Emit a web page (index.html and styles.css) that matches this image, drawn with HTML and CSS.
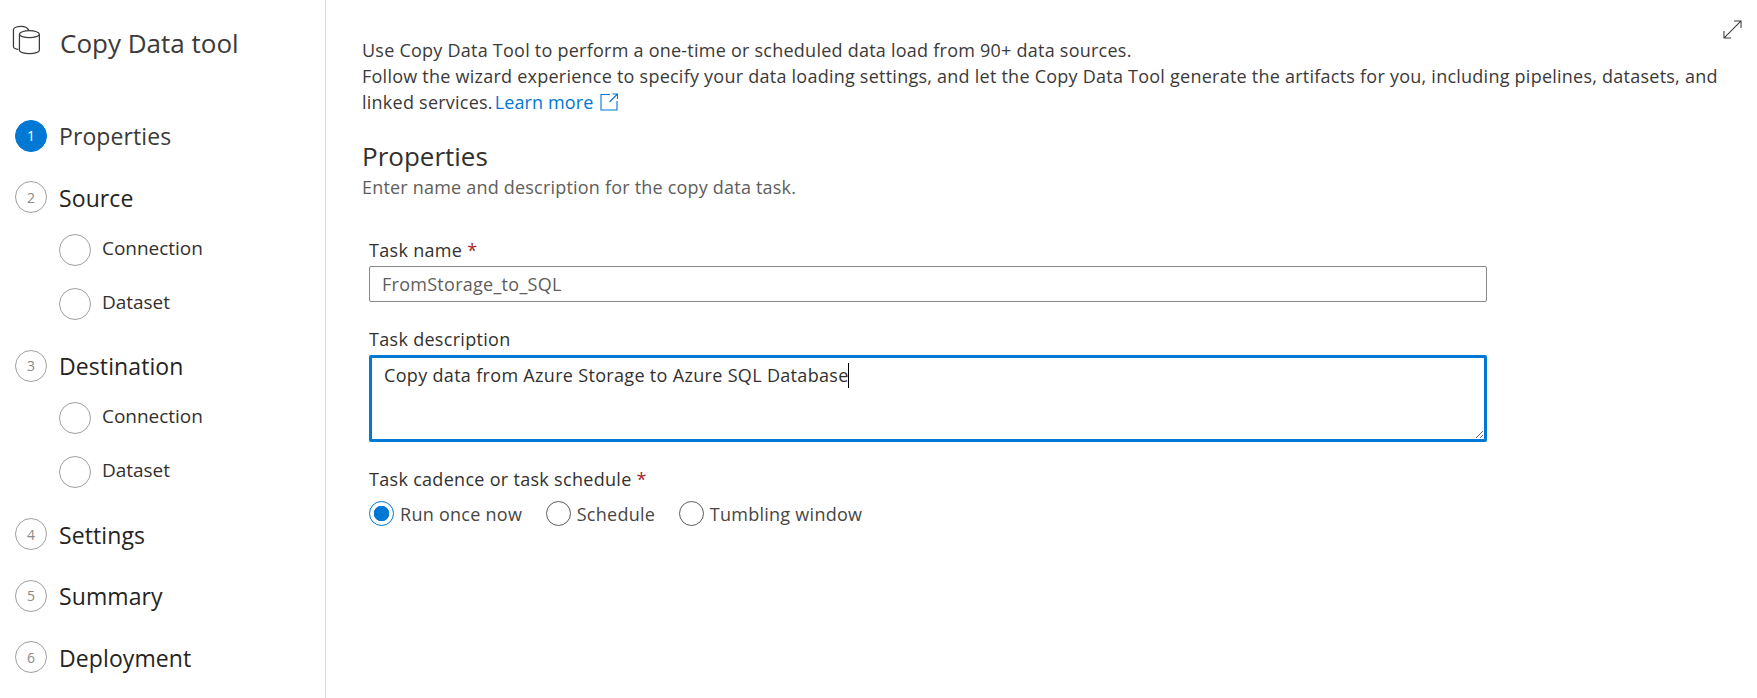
FILE: index.html
```html
<!DOCTYPE html>
<html lang="en">
<head>
<meta charset="utf-8">
<title>Copy Data tool</title>
<link rel="stylesheet" href="styles.css">
</head>
<body>
<div class="app">
  <aside class="sidebar">
    <header class="brand">
      <svg class="brand-icon" viewBox="0 0 30 32" fill="none" stroke="#3b3b3b" stroke-width="1.3">
        <ellipse cx="18" cy="9.5" rx="10.3" ry="3.6"/>
        <path d="M7.7 9.5V26c0 2 4.6 3.6 10.3 3.6S28.3 28 28.300 26V9.500"/>
        <path d="M17.500 5.300C15.800 2.800 12.500 1.500 9.500 1.500 5.500 1.500 1.500 2.800 1.500 5V22.500C1.500 24 3.500 24.800 6.500 25.300"/>
      </svg>
      <span class="brand-title">Copy Data tool</span>
    </header>
    <nav class="steps">
      <div class="step active"><span class="badge">1</span><span class="step-label">Properties</span></div>
      <div class="step"><span class="badge">2</span><span class="step-label">Source</span></div>
      <div class="sub first"><span class="sub-dot"></span><span class="sub-label">Connection</span></div>
      <div class="sub"><span class="sub-dot"></span><span class="sub-label">Dataset</span></div>
      <div class="step"><span class="badge">3</span><span class="step-label">Destination</span></div>
      <div class="sub first"><span class="sub-dot"></span><span class="sub-label">Connection</span></div>
      <div class="sub"><span class="sub-dot"></span><span class="sub-label">Dataset</span></div>
      <div class="step"><span class="badge">4</span><span class="step-label">Settings</span></div>
      <div class="step"><span class="badge">5</span><span class="step-label">Summary</span></div>
      <div class="step"><span class="badge">6</span><span class="step-label">Deployment</span></div>
    </nav>
  </aside>
  <main class="main">
    <svg class="expand" viewBox="0 0 20 20" fill="none" stroke="#3b3b3b" stroke-width="1.1">
      <path d="M1 19L19 1M11.500 1H19V8.500M1 11.500V19H8.500"/>
    </svg>
    <p class="intro">Use Copy Data Tool to perform a one-time or scheduled data load from 90+ data sources.<br>Follow the wizard experience to specify your data loading settings, and let the Copy Data Tool generate the artifacts for you, including pipelines, datasets, and<br>linked services. <a class="link" href="#">Learn more<svg class="ext" viewBox="0 0 18 18" fill="none" stroke="#0078d4" stroke-width="1.100"><path d="M10 1.500H1V17H17V8M12.500 1H17.500V6M17.500 1L9.500 9"/></svg></a></p>
    <h1 class="title">Properties</h1>
    <p class="subtitle">Enter name and description for the copy data task.</p>
    <form class="form">
      <div class="label">Task name <span class="req">*</span></div>
      <div class="input">FromStorage_to_SQL</div>
      <div class="label label-desc">Task description</div>
      <div class="textarea">Copy data from Azure Storage to Azure SQL Database<span class="caret"></span></div>
      <div class="label label-cad">Task cadence or task schedule <span class="req">*</span></div>
      <div class="radios">
        <div class="radio on"><span class="radio-dot"></span><span class="radio-text">Run once now</span></div>
        <div class="radio"><span class="radio-dot"></span><span class="radio-text">Schedule</span></div>
        <div class="radio"><span class="radio-dot"></span><span class="radio-text">Tumbling window</span></div>
      </div>
    </form>
  </main>
</div>
</body>
</html>
```
FILE: styles.css
```css
* { box-sizing: border-box; }
html, body { margin: 0; height: 100%; background: #fff; }
body {
  font-family: "Open Sans", "Noto Sans", "Liberation Sans", sans-serif;
  color: #323130;
  overflow: hidden;
}
.app { display: flex; height: 698px; }

.sidebar {
  width: 326px;
  flex: none;
  border-right: 1px solid #dcdcdc;
  padding: 24px 0 0 12px;
}
.brand { display: flex; align-items: center; height: 32px; }
.brand-icon { width: 29px; height: 31px; flex: none; }
.brand-title {
  margin-left: 19px;
  padding-top: 5px;
  font-size: 26px;
  line-height: 32px;
  color: #3b3a39;
}
.steps { margin-top: 64px; margin-left: 3px; }
.step { display: flex; align-items: center; height: 31px; margin-top: 30.5px; }
.step:first-child { margin-top: 0; }
.badge {
  width: 32px;
  height: 32px;
  flex: none;
  border: 1px solid #a0a0a0;
  border-radius: 50%;
  display: flex;
  align-items: center;
  justify-content: center;
  font-size: 14px;
  color: #8a8886;
}
.active .badge { background: #0078d4; border-color: #0078d4; color: #fff; }
.step-label {
  margin-left: 12px;
  padding-top: 1px;
  font-size: 23px;
  letter-spacing: 0.1px;
  font-weight: 500;
  color: #252423;
}
.active .step-label { color: #3b3a39; }
.sub { display: flex; align-items: center; height: 32px; margin: 22px 0 0 44px; }
.sub.first { margin-top: 21px; }
.sub-dot {
  width: 32px;
  height: 32px;
  flex: none;
  border: 1px solid #a0a0a0;
  border-radius: 50%;
}
.sub-label {
  margin-left: 11px;
  padding-bottom: 4px;
  font-size: 19px;
  letter-spacing: -0.03px;
  font-weight: 500;
  color: #323130;
}

.main { flex: 1; position: relative; padding: 37px 0 0 36px; min-width: 0; }
.expand { position: absolute; top: 20px; right: 15px; width: 19px; height: 19px; }
.intro {
  margin: 0;
  font-size: 18px;
  line-height: 26px;
  letter-spacing: 0.24px;
  color: #3b3a39;
  white-space: nowrap;
}
.link { margin-left: -3px; letter-spacing: 0.12px; color: #0078d4; text-decoration: none; }
.ext { width: 18px; height: 18px; margin-left: 7px; vertical-align: -2px; }
.title {
  margin: 23px 0 0;
  font-size: 26px;
  line-height: 36px;
  font-weight: 500;
  color: #323130;
}
.subtitle {
  margin: 1px 0 0;
  font-size: 18px;
  line-height: 24px;
  letter-spacing: 0.2px;
  color: #605e5c;
}
.form { margin: 39px 0 0 7px; width: 1118px; }
.label {
  font-size: 18px;
  line-height: 24px;
  font-weight: 500;
  letter-spacing: 0.3px;
  color: #323130;
}
.req { color: #a4262c; }
.input {
  margin-top: 4px;
  height: 36px;
  border: 1px solid #8a8886;
  border-radius: 2px;
  padding: 0 12px;
  font-size: 18px;
  line-height: 34px;
  letter-spacing: 0.27px;
  color: #605e5c;
}
.label-desc { margin-top: 25px; }
.textarea {
  margin-top: 4px;
  height: 87px;
  border: 3px solid #0078d4;
  border-radius: 2px;
  padding: 4px 12px;
  font-size: 18px;
  line-height: 26px;
  letter-spacing: 0.32px;
  color: #323130;
  overflow: auto;
  resize: both;
}
.caret {
  display: inline-block;
  height: 25px;
  margin-left: -1px;
  border-left: 1px solid #000;
  vertical-align: -6px;
}
.label-cad { margin-top: 25px; }
.radios { display: flex; margin-top: 9px; font-size: 18px; letter-spacing: 0.27px; color: #484644; }
.radio { display: flex; align-items: center; height: 26px; margin-right: 23.5px; }
.radio-text { padding-top: 1px; }
.radio-dot {
  width: 25px;
  height: 25px;
  flex: none;
  margin-right: 6px;
  border: 1px solid #605e5c;
  border-radius: 50%;
  background: #fff;
}
.on .radio-dot {
  border-color: #0078d4;
  background: radial-gradient(circle, #0078d4 0 7.5px, #fff 8px);
}
```
